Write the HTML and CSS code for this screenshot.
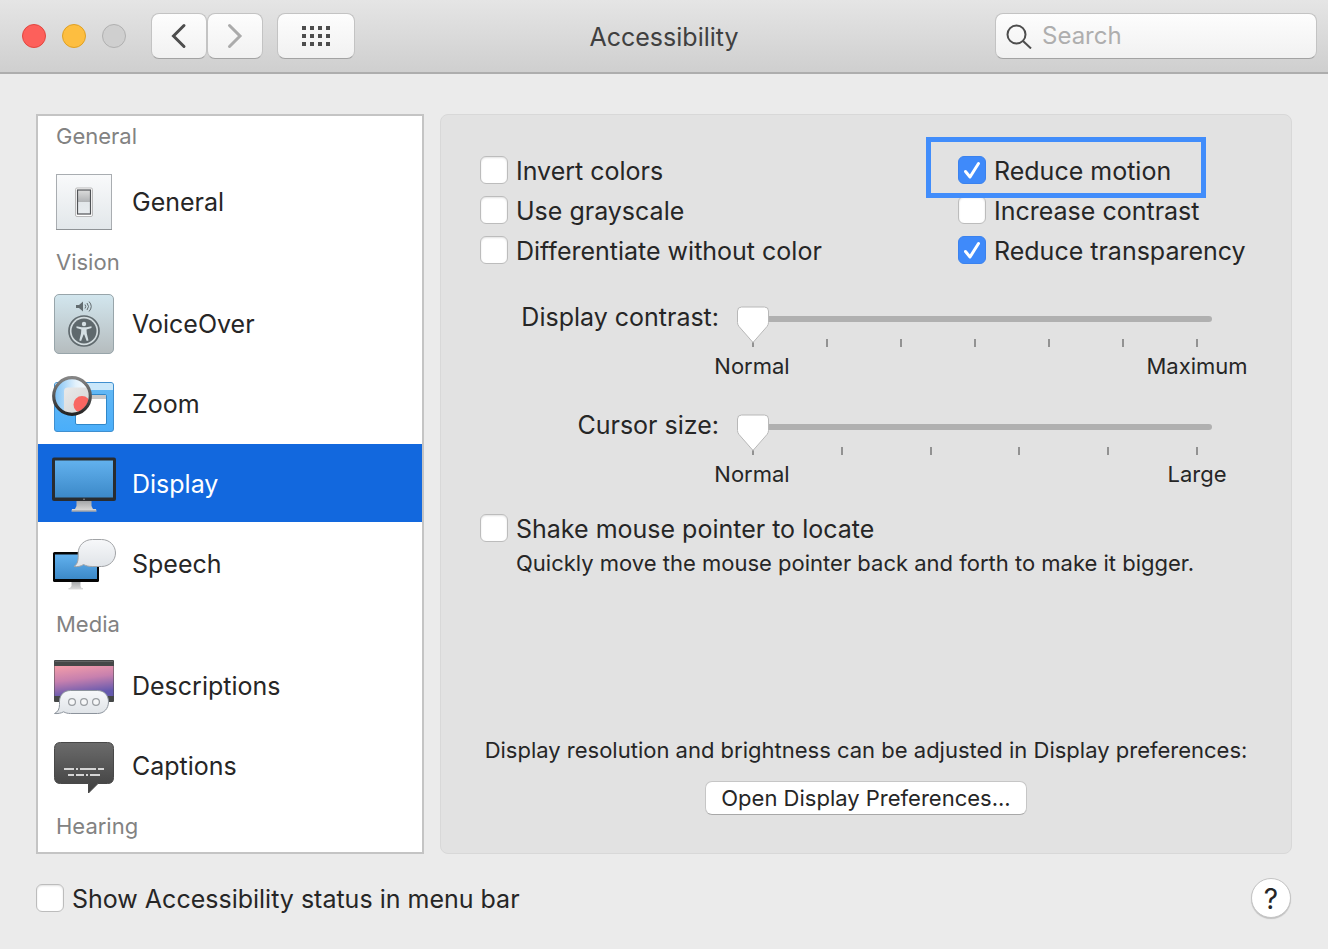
FILE: index.html
```html
<!DOCTYPE html>
<html lang="en">
<head>
<meta charset="utf-8">
<meta name="viewport" content="width=device-width, initial-scale=1">
<title>Accessibility</title>
<link rel="stylesheet" href="styles.css">
</head>
<body>
<header class="toolbar">
  <div class="toolbar-left">
    <div class="lights">
      <button class="light light-close" aria-label="Close"></button>
      <button class="light light-min" aria-label="Minimize"></button>
      <button class="light light-off" aria-label="Full screen" disabled></button>
    </div>
    <div class="history">
      <button class="tool-btn" aria-label="Back"><svg width="16" height="26" viewBox="0 0 16 26"><path d="M13 2.500 2.500 13 13 23.500" fill="none" stroke="#4d4d4d" stroke-width="3" stroke-linecap="round"/></svg></button>
      <button class="tool-btn" aria-label="Forward"><svg width="16" height="26" viewBox="0 0 16 26"><path d="M2.500 2.500 13 13 2.500 23.500" fill="none" stroke="#ababab" stroke-width="3" stroke-linecap="round"/></svg></button>
    </div>
    <button class="tool-btn tool-grid" aria-label="Show all">
      <svg width="28" height="20" viewBox="0 0 28 20" fill="#4d4d4d"><path d="M0 0h4v4H0zM8 0h4v4H8zM16 0h4v4h-4zM24 0h4v4h-4zM0 8h4v4H0zM8 8h4v4H8zM16 8h4v4h-4zM24 8h4v4h-4zM0 16h4v4H0zM8 16h4v4H8zM16 16h4v4h-4zM24 16h4v4h-4z"/></svg>
    </button>
  </div>
  <h1 class="title">Accessibility</h1>
  <label class="search">
    <svg width="26" height="26" viewBox="0 0 26 26" fill="none" stroke="#4d4d4d" stroke-width="2"><circle cx="10.500" cy="11.500" r="9"/><path d="M17 18l8 7.500"/></svg>
    <input class="search-input" type="search" placeholder="Search" aria-label="Search">
  </label>
</header>

<main class="content">
  <nav class="sidebar" aria-label="Categories">
    <h2 class="group group-first">General</h2>
    <button class="item">
      <svg class="icon" viewBox="0 0 64 64">
        <defs>
          <linearGradient id="plate" x2="0" y2="1"><stop stop-color="#f9fafb"/><stop offset="1" stop-color="#e2e7ea"/></linearGradient>
          <linearGradient id="rocker" x2="0" y2="1"><stop stop-color="#dcdcdc"/><stop offset=".48" stop-color="#b2b4b6"/><stop offset=".5" stop-color="#e3e7ea"/><stop offset="1" stop-color="#e8ecef"/></linearGradient>
        </defs>
        <rect x="4.500" y="4.500" width="55" height="55" fill="url(#plate)" stroke="#a9adb1"/>
        <path d="M4 59.500h56" stroke="#8f9396"/>
        <rect x="23.500" y="18" width="17" height="28.500" rx="1.500" fill="#fff" stroke="#aaa" stroke-width=".8"/>
        <rect x="25.500" y="20" width="13" height="24" fill="url(#rocker)" stroke="#505356" stroke-width="1.200"/>
      </svg>
      <span>General</span>
    </button>
    <h2 class="group">Vision</h2>
    <button class="item">
      <svg class="icon" viewBox="0 0 64 64">
        <defs><linearGradient id="vo" x2="0" y2="1"><stop stop-color="#d2e6ee"/><stop offset="1" stop-color="#b5bcbe"/></linearGradient></defs>
        <rect x="2.500" y="2.500" width="59" height="59" rx="4.500" fill="url(#vo)" stroke="#98a5aa"/>
        <path d="M24 13h3l4-3.500v10L27 16h-3z" fill="#626c70"/>
        <path d="M33 12.500q1.500 2 0 4M35 11q3 3.500 0 7M37 9.500q4.500 5 0 10" fill="none" stroke="#626c70"/>
        <circle cx="32" cy="39" r="15" fill="#d3dcdf" stroke="#606a6e" stroke-width="1.700"/>
        <circle cx="32" cy="39" r="12.500" fill="#5f696d"/>
        <circle cx="32" cy="32" r="2.200" fill="#d5e0e4"/>
        <path d="M24.500 34.200l5 1h5l5-1v1.800l-5 1.400.3 4 1.700 7-1.800.5-2.500-6.500h-.6l-2.500 6.500-1.800-.5 1.700-7 .3-4-4.800-1.400z" fill="#d5e0e4"/>
      </svg>
      <span>VoiceOver</span>
    </button>
    <button class="item">
      <svg class="icon" viewBox="0 0 64 64">
        <defs>
          <linearGradient id="zwin" x2="0" y2="1"><stop stop-color="#65b9f3"/><stop offset="1" stop-color="#4aaefa"/></linearGradient>
          <linearGradient id="lens"><stop stop-color="#79bff5"/><stop offset=".6" stop-color="#e2f1fc"/><stop offset="1" stop-color="#fff"/></linearGradient>
          <linearGradient id="ring" x2="0" y2="1"><stop stop-color="#858585"/><stop offset="1" stop-color="#242424"/></linearGradient>
          <linearGradient id="sq" x2="1" y2="1"><stop stop-color="#e9e9e9"/><stop offset="1" stop-color="#cfcfcf"/></linearGradient>
          <clipPath id="lensclip"><circle cx="20" cy="24" r="17"/></clipPath>
        </defs>
        <rect x="2.500" y="10.500" width="59" height="49" rx="2.500" fill="url(#zwin)" stroke="#3f8fcf"/>
        <path d="M3 18v-5q0-2 2-2h54q2 0 2 2v5z" fill="#c9e7fa"/>
        <rect x="23.500" y="22.500" width="31" height="30" rx="1.500" fill="#fff" stroke="#2f87c9"/>
        <path d="M24 23h30v4H24z" fill="#c8c8c8"/>
        <circle cx="20" cy="24" r="18" fill="url(#lens)"/>
        <g clip-path="url(#lensclip)"><rect x="12" y="15.500" width="32" height="32" rx="4" fill="url(#sq)"/><circle cx="30" cy="32.500" r="8.500" fill="#f96661"/></g>
        <circle cx="20" cy="24" r="18.300" fill="none" stroke="url(#ring)" stroke-width="3.200"/>
      </svg>
      <span>Zoom</span>
    </button>
    <button class="item item-selected" aria-current="page">
      <svg class="icon" viewBox="0 0 64 64">
        <defs>
          <linearGradient id="screen" x2="0" y2="1"><stop stop-color="#62b1ee"/><stop offset="1" stop-color="#3c89c8"/></linearGradient>
          <linearGradient id="stand" x2="0" y2="1"><stop stop-color="#9fa1a3"/><stop offset="1" stop-color="#dedede"/></linearGradient>
        </defs>
        <path d="M24.500 48h15v6l1.500 3h3l.5 2.500h-25L20 57h3l1.500-3z" fill="url(#stand)"/>
        <path d="M20 59h24" stroke="#8b8d90"/>
        <rect y="5.500" width="64" height="43.500" rx="2" fill="#292c2f"/>
        <rect x="3" y="8.500" width="58" height="37" fill="url(#screen)"/>
        <circle cx="32" cy="47.300" r=".8" fill="#999"/>
      </svg>
      <span>Display</span>
    </button>
    <button class="item">
      <svg class="icon" viewBox="0 0 64 64">
        <defs><linearGradient id="bubble" x2="0" y2="1"><stop stop-color="#f7f8fa"/><stop offset="1" stop-color="#e0e4e8"/></linearGradient></defs>
        <path d="M19.500 49h9v5l1 2h1.500v1.500H16.500V56H18l1.500-2z" fill="url(#stand)"/>
        <rect x="1" y="20" width="46" height="30" rx="1.500" fill="#050505"/>
        <rect x="3" y="22.500" width="42" height="24.500" fill="url(#screen)"/>
        <path d="M40.500 7.500h9c8 0 14 6 14 13.500s-6 13.500-14 13.500h-9c-4 0-6-.5-9-2-2.500 1.800-6 2.500-9.500 2 3-2 4-4.500 4.200-9V21c0-7.500 6-13.500 14.300-13.500z" fill="url(#bubble)" stroke="#a1a3a6"/>
      </svg>
      <span>Speech</span>
    </button>
    <h2 class="group">Media</h2>
    <button class="item">
      <svg class="icon" viewBox="0 0 64 64">
        <defs>
          <linearGradient id="sunset" x2=".25" y2="1"><stop stop-color="#f49ea9"/><stop offset=".5" stop-color="#c780ae"/><stop offset="1" stop-color="#6559ae"/></linearGradient>
        </defs>
        <rect x="2" y="6" width="60" height="42" rx="1" fill="#454747"/>
        <path d="M3 7.500h58" stroke="#636464"/>
        <rect x="2.500" y="12" width="59" height="30" fill="url(#sunset)"/>
        <path d="M18.500 36.500h27c6.500 0 11 4.500 11 11.300s-4.500 11.700-11 11.700h-27c-3 0-4.500-.5-7-1.700-2.500 1.500-5.500 2-9 1.700 3.500-1.700 5-4.500 5-9v-3c0-6.500 4.500-11 11-11z" fill="url(#bubble)" stroke="#8c939c"/>
        <g fill="#f6f7f8" stroke="#999da1" stroke-width="1.200"><circle cx="20" cy="48" r="3.400"/><circle cx="32" cy="48" r="3.400"/><circle cx="44" cy="48" r="3.400"/></g>
      </svg>
      <span>Descriptions</span>
    </button>
    <button class="item">
      <svg class="icon" viewBox="0 0 64 64">
        <defs><linearGradient id="cap" x2="0" y2="1"><stop stop-color="#6b6b6b"/><stop offset="1" stop-color="#3f3f3f"/></linearGradient></defs>
        <path d="M8.500 8.500h47q6 0 6 6v29q0 6-6 6H46L36.500 59V49.500h-28q-6 0-6-6v-29q0-6 6-6z" fill="url(#cap)" stroke="#484848"/>
        <path d="M12 35h10m2 0h2m2 0h16m2 0h6M16 41h6m2 0h8m2 0h2m2 0h10" stroke="#d5d5d5" stroke-width="2"/>
      </svg>
      <span>Captions</span>
    </button>
    <h2 class="group">Hearing</h2>
  </nav>

  <section class="panel" aria-label="Display">
    <div class="options">
      <div class="option-col">
        <label class="check"><input type="checkbox"><span>Invert colors</span></label>
        <label class="check"><input type="checkbox"><span>Use grayscale</span></label>
        <label class="check"><input type="checkbox"><span>Differentiate without color</span></label>
      </div>
      <div class="option-col">
        <label class="check check-marked"><input type="checkbox" checked><span>Reduce motion</span></label>
        <label class="check"><input type="checkbox"><span>Increase contrast</span></label>
        <label class="check"><input type="checkbox" checked><span>Reduce transparency</span></label>
      </div>
    </div>

    <div class="sliders">
      <label class="slider-label" for="contrast">Display contrast:</label>
      <div class="slider">
        <div class="ticks"><i></i><i></i><i></i><i></i><i></i><i></i><i></i></div>
        <input id="contrast" class="range" type="range" min="0" max="6" value="0">
        <div class="ends"><span>Normal</span><span>Maximum</span></div>
      </div>
      <label class="slider-label" for="cursor">Cursor size:</label>
      <div class="slider">
        <div class="ticks"><i></i><i></i><i></i><i></i><i></i><i></i></div>
        <input id="cursor" class="range" type="range" min="0" max="5" value="0">
        <div class="ends"><span>Normal</span><span>Large</span></div>
      </div>
    </div>

    <div class="shake">
      <label class="check"><input type="checkbox" aria-describedby="shake-note"><span>Shake mouse pointer to locate</span></label>
      <p class="note shake-note" id="shake-note">Quickly move the mouse pointer back and forth to make it bigger.</p>
    </div>

    <div class="more">
      <p class="note">Display resolution and brightness can be adjusted in Display preferences:</p>
      <button class="push">Open Display Preferences...</button>
    </div>
  </section>
</main>

<footer class="footer">
  <label class="check"><input type="checkbox"><span>Show Accessibility status in menu bar</span></label>
  <button class="help" aria-label="Help">?</button>
</footer>
</body>
</html>
```
FILE: styles.css
```css
* {
  box-sizing: border-box;
}

body {
  margin: 0;
  min-height: 100vh;
  display: flex;
  flex-direction: column;
  background: #ebebeb;
  color: #262626;
  font: 25px/32px Inter, "Liberation Sans", sans-serif;
}

button,
input {
  font: inherit;
  color: inherit;
  margin: 0;
}

button {
  padding: 0;
  border: 0;
}

h1,
h2,
p {
  margin: 0;
  font-weight: 400;
}

/* Toolbar */
.toolbar {
  display: grid;
  grid-template-columns: 1fr auto 1fr;
  align-items: center;
  padding: 13px 11px;
  background: linear-gradient(#e5e5e5, #cfcfcf);
  border-bottom: 2px solid #adadad;
}

.toolbar-left {
  display: flex;
  align-items: center;
  padding-left: 11px;
}

.lights {
  display: flex;
  gap: 16px;
  margin-right: 25px;
}

.light {
  width: 24px;
  height: 24px;
  border-radius: 50%;
  border: 1px solid;
}

.light-close {
  background: #fd605b;
  border-color: #e2463f;
}

.light-min {
  background: #fdbe40;
  border-color: #dfa023;
}

.light-off {
  background: #cfcfcf;
  border-color: #b0b0b0;
}

.history {
  display: flex;
  margin-right: 14px;
}

.tool-btn {
  display: flex;
  align-items: center;
  justify-content: center;
  width: 56px;
  height: 46px;
  border: 1px solid #c3c3c3;
  border-bottom-color: #a3a3a3;
  border-radius: 8px;
  background: linear-gradient(#fdfdfd, #f1f1f1);
}

.tool-grid {
  width: 78px;
}

.title {
  padding-top: 2px;
  font-size: 25px;
  color: #404040;
}

.search {
  justify-self: end;
  display: flex;
  align-items: center;
  gap: 10px;
  width: 100%;
  max-width: 322px;
  height: 46px;
  padding: 0 10px;
  border: 1px solid #c3c3c3;
  border-bottom-color: #a3a3a3;
  border-radius: 8px;
  background: linear-gradient(#fdfdfd, #f1f1f1);
}

.search svg {
  flex: none;
}

.search-input {
  flex: 1;
  min-width: 0;
  padding: 0;
  border: 0;
  background: none;
  outline: 0;
  font-size: 24px;
}

.search-input::placeholder {
  color: #aeaeae;
}

/* Layout */
.content {
  flex: 1;
  display: grid;
  grid-template-columns: 388px 1fr;
  gap: 16px;
  padding: 40px 36px 0;
}

/* Sidebar */
.sidebar {
  border: 2px solid #c4c4c4;
  background: #fff;
  padding-bottom: 4px;
}

.group {
  padding-left: 18px;
  padding-bottom: 2px;
  font-size: 22px;
  line-height: 40px;
  color: #828282;
}

.group-first {
  padding-bottom: 6px;
}

.item {
  display: flex;
  align-items: center;
  gap: 16px;
  width: 100%;
  height: 80px;
  padding-left: 14px;
  border-bottom: 2px solid #fff;
  padding-top: 2px;
  background: #fff;
  text-align: left;
}

.item-selected {
  background: #1268de;
  color: #fff;
}

.icon {
  width: 64px;
  height: 64px;
  flex: none;
}

/* Panel */
.panel {
  display: flex;
  flex-direction: column;
  padding: 35px 39px 38px;
  border: 1px solid #d8d8d8;
  border-radius: 8px;
  background: #e2e2e2;
}

.options {
  display: grid;
  grid-template-columns: 478fr 294fr;
}

.option-col {
  display: flex;
  flex-direction: column;
  align-items: flex-start;
}

.check {
  display: inline-flex;
  align-items: center;
  gap: 8px;
  height: 40px;
  white-space: nowrap;
}

.check span {
  padding-top: 2px;
}

.check input {
  appearance: none;
  flex: none;
  width: 28px;
  height: 28px;
  border: 1px solid #bcbcbc;
  border-radius: 6px;
  background: #fff;
  box-shadow: inset 0 1px 2px #0000001f;
}

.check input:checked {
  border-color: #3b82ee;
  box-shadow: none;
  background: #3f8afa url("data:image/svg+xml,%3Csvg xmlns='http://www.w3.org/2000/svg' viewBox='0 0 26 26'%3E%3Cpath d='M6.500 14.500l4.500 5.500L19.500 6.500' fill='none' stroke='white' stroke-width='3' stroke-linecap='round' stroke-linejoin='round'/%3E%3C/svg%3E") center / 26px 26px no-repeat;
}

.check-marked {
  position: relative;
}

.check-marked::after {
  content: "";
  position: absolute;
  inset: -13px -35px -8px -32px;
  border: 5px solid #418dfb;
  pointer-events: none;
}

.sliders {
  display: grid;
  grid-template-columns: 239px 1fr;
  gap: 28px 18px;
  margin-top: 30px;
  padding-right: 40px;
}

.slider-label {
  text-align: right;
  line-height: 34px;
}

.slider {
  display: grid;
  grid-template-rows: 39px 8px 5px 28px;
}

.range {
  grid-area: 1 / 1;
  appearance: none;
  width: 100%;
  height: 6px;
  margin-top: 16px;
  background: none;
  outline: 0;
}

.range::-webkit-slider-runnable-track {
  height: 6px;
  border-radius: 3px;
  background: #b0b0b0;
}

.range::-webkit-slider-thumb {
  appearance: none;
  width: 32px;
  height: 38px;
  margin-top: -10px;
  background: url("data:image/svg+xml,%3Csvg xmlns='http://www.w3.org/2000/svg' viewBox='0 0 32 38'%3E%3Cpath d='M4.500 1h23q4 0 4 4v11.500q0 2-1.500 4L16 36.500 2 20.500Q.5 18.500 .5 16.500V5q0-4 4-4z' fill='white' stroke='%23b8b8b8'/%3E%3C/svg%3E") center / 32px 38px no-repeat;
}

.ticks {
  grid-area: 2 / 1;
  display: flex;
  justify-content: space-between;
  padding: 0 14px 0 15px;
}

.ticks i {
  width: 2px;
  background: #929292;
}

.ends {
  grid-area: 4 / 1;
  display: flex;
  justify-content: space-between;
  padding: 0 15px;
  font-size: 22px;
  line-height: 28px;
}

.ends span {
  display: flex;
  justify-content: center;
  width: 0;
}

.shake {
  margin-top: 20px;
}

.note {
  font-size: 22px;
  line-height: 28px;
}

.shake-note {
  padding-left: 36px;
}

.more {
  margin-top: auto;
  display: flex;
  flex-direction: column;
  align-items: center;
  gap: 17px;
  text-align: center;
}

.push {
  height: 34px;
  padding: 0 15px;
  border: 1px solid #c6c6c6;
  border-bottom-color: #a8a8a8;
  border-radius: 7px;
  background: #fff;
  font-size: 22px;
  line-height: 30px;
}

/* Footer */
.footer {
  display: flex;
  align-items: center;
  justify-content: space-between;
  padding: 24px 37px 31px 36px;
}

.help {
  width: 40px;
  height: 40px;
  border: 1px solid #c4c4c4;
  border-radius: 50%;
  background: #fff;
  box-shadow: 0 1px 1px #0000002e;
  padding-top: 2px;
  font-size: 28px;
}
```
